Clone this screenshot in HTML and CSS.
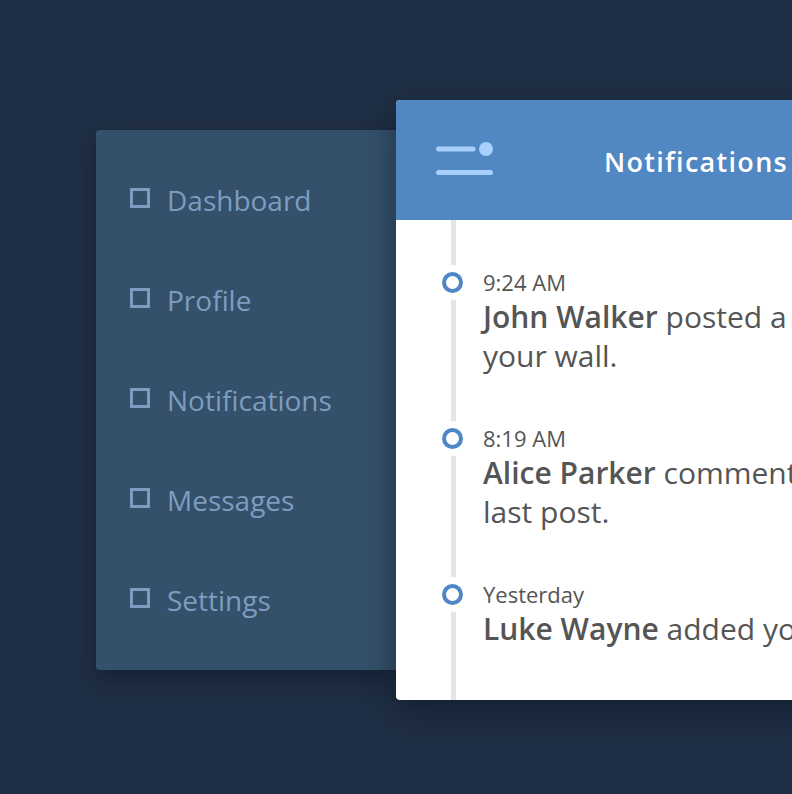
FILE: index.html
```html
<!DOCTYPE html>
<html>
<head>
<meta charset="utf-8">
<link rel="stylesheet" href="styles.css">
</head>
<body>
<div class="stage">
  <nav class="sidebar">
    <div class="nav-item"><span class="nav-icon"></span><span>Dashboard</span></div>
    <div class="nav-item"><span class="nav-icon"></span><span>Profile</span></div>
    <div class="nav-item"><span class="nav-icon"></span><span>Notifications</span></div>
    <div class="nav-item"><span class="nav-icon"></span><span>Messages</span></div>
    <div class="nav-item"><span class="nav-icon"></span><span>Settings</span></div>
  </nav>
  <section class="panel">
    <header class="panel-header">
      <svg class="menu-icon" width="57" height="33" viewBox="0 0 57 33">
        <line x1="2.5" y1="7" x2="37" y2="7" stroke="#a8d0fd" stroke-width="5" stroke-linecap="round"/>
        <circle cx="50" cy="7" r="7" fill="#a8d0fd"/>
        <line x1="2.5" y1="30.5" x2="54.5" y2="30.5" stroke="#a8d0fd" stroke-width="5" stroke-linecap="round"/>
      </svg>
      <h1 class="panel-title">Notifications</h1>
      <span></span>
    </header>
    <div class="timeline">
      <div class="entry">
        <span class="dot"></span>
        <div class="time">9:24 AM</div>
        <p class="message"><strong>John Walker</strong> posted a photo on your wall.</p>
      </div>
      <div class="entry">
        <span class="dot"></span>
        <div class="time">8:19 AM</div>
        <p class="message"><strong>Alice Parker</strong> commented on your last post.</p>
      </div>
      <div class="entry">
        <span class="dot"></span>
        <div class="time">Yesterday</div>
        <p class="message"><strong>Luke Wayne</strong> added your photo.</p>
      </div>
    </div>
  </section>
</div>
</body>
</html>
```

FILE: styles.css
```css
* { box-sizing: border-box; }
html, body {
  margin: 0;
  padding: 0;
  height: 100%;
}
body {
  background: #1f2f45;
  font-family: "Open Sans", "Noto Sans", sans-serif;
  overflow: hidden;
}
.stage {
  display: flex;
  align-items: flex-start;
  padding: 100px 0 0 96px;
  width: 1200px;
}
.sidebar {
  flex: none;
  width: 300px;
  height: 540px;
  margin-top: 30px;
  padding-top: 20px;
  background: #34506a;
  border-radius: 4px 0 0 4px;
  box-shadow: 0 10px 22px rgba(10, 18, 30, 0.45);
}
.nav-item {
  height: 100px;
  display: flex;
  align-items: center;
  padding-left: 34px;
  gap: 17px;
  color: #7d9dc0;
  font-size: 28px;
}
.nav-icon {
  width: 20px;
  height: 20px;
  border: 3px solid #7d9dc0;
  margin-bottom: 5px;
}
.panel {
  flex: none;
  width: 600px;
  height: 600px;
  background: #fff;
  border-radius: 4px;
  overflow: hidden;
  box-shadow: 0 12px 30px rgba(10, 18, 30, 0.5);
  display: flex;
  flex-direction: column;
}
.panel-header {
  flex: none;
  height: 120px;
  background: #5187c2;
  display: grid;
  grid-template-columns: 1fr auto 1fr;
  align-items: center;
  padding: 0 40px;
}
.menu-icon {
  display: block;
  margin-top: -3px;
}
.panel-title {
  margin: 0;
  color: #fff;
  font-size: 27px;
  font-weight: 600;
  letter-spacing: 1.3px;
  padding-top: 2px;
}
.timeline {
  position: relative;
  flex: 1;
  padding: 47px 0 0 87px;
}
.timeline::before {
  content: "";
  position: absolute;
  left: 55px;
  top: 0;
  bottom: 0;
  width: 5px;
  background: #e5e5e5;
}
.entry {
  position: relative;
  width: 485px;
  margin-bottom: 48px;
  color: #555;
}
.dot {
  position: absolute;
  left: -41px;
  top: 5px;
  width: 21px;
  height: 21px;
  border: 4px solid #4f86c6;
  border-radius: 50%;
  background: #fff;
  box-shadow: 0 0 0 7px #fff;
}
.time {
  font-size: 22px;
  line-height: 30px;
}
.message {
  margin: 0;
  font-size: 30px;
  line-height: 39px;
}
.message strong {
  font-weight: 600;
}
```
